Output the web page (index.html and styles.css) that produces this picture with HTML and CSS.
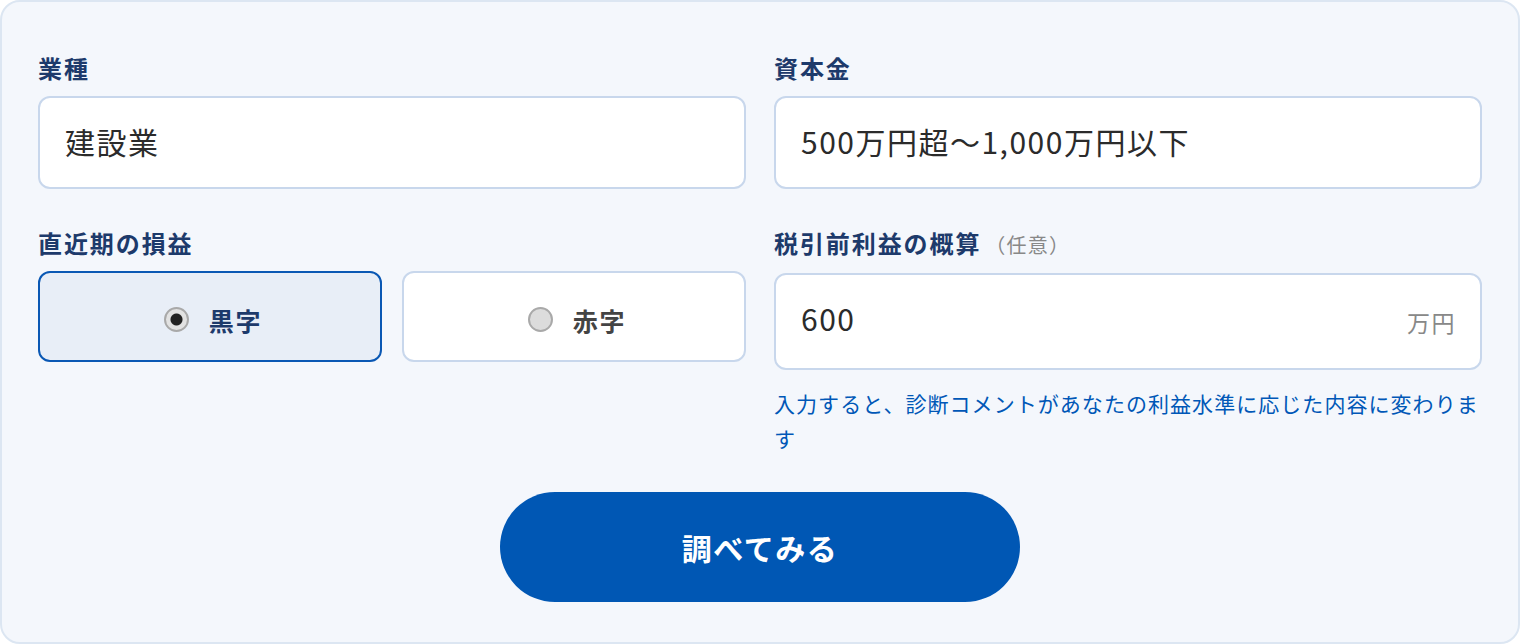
FILE: index.html
```html
<!DOCTYPE html>
<html lang="ja">

<head>
  <meta charset="UTF-8">
  <meta name="viewport" content="width=device-width, initial-scale=1.0">
  <title>診断フォーム</title>
  <link rel="stylesheet" href="styles.css">
</head>

<body>
  <form class="check-form" onsubmit="return false;">
    <div class="form-grid">
      <div class="field">
        <div class="field-label">業種</div>
        <div class="field-box">建設業</div>
      </div>

      <div class="field">
        <div class="field-label">資本金</div>
        <div class="field-box">500万円超〜1,000万円以下</div>
      </div>

      <div class="field">
        <div class="field-label">直近期の損益</div>
        <div class="choice-row">
          <label class="choice is-active">
            <span class="radio-dot checked"></span>
            <span class="choice-text">黒字</span>
          </label>
          <label class="choice">
            <span class="radio-dot"></span>
            <span class="choice-text">赤字</span>
          </label>
        </div>
      </div>

      <div class="field">
        <div class="field-label">税引前利益の概算<span class="optional">（任意）</span></div>
        <div class="field-box tall">
          <span>600</span>
          <span class="unit">万円</span>
        </div>
        <p class="hint">入力すると、診断コメントがあなたの利益水準に応じた内容に変わります</p>
      </div>
    </div>

    <div class="actions">
      <button type="submit" class="submit-btn">調べてみる</button>
    </div>
  </form>
</body>

</html>
```

FILE: styles.css
```css
* {
  box-sizing: border-box;
}

body {
  margin: 0;
  padding: 0;
  font-family: "Noto Sans CJK JP", "Noto Sans", sans-serif;
  background: #ffffff;
  color: #2b2b2b;
}

.check-form {
  width: 1520px;
  height: 644px;
  background: #f4f7fc;
  border: 2px solid #dce6f2;
  border-radius: 20px;
  padding: 48px 36px 40px;
}

.form-grid {
  display: grid;
  grid-template-columns: 1fr 1fr;
  column-gap: 28px;
  row-gap: 36px;
  align-items: start;
}

.field-label {
  font-size: 24px;
  line-height: 36px;
  font-weight: 700;
  letter-spacing: 0.08em;
  color: #1d3a6b;
  margin-bottom: 10px;
}

.optional {
  font-size: 20px;
  font-weight: 400;
  letter-spacing: 0.06em;
  color: #888;
  margin-left: 4px;
}

.field-box {
  display: flex;
  align-items: center;
  justify-content: space-between;
  height: 93px;
  padding: 0 24px 4px 25px;
  background: #fff;
  border: 2px solid #c8d7ec;
  border-radius: 12px;
  font-size: 30px;
  letter-spacing: 0.05em;
  color: #2b2b2b;
}

.field-box.tall {
  height: 97px;
  padding-bottom: 8px;
}

.unit {
  font-size: 23px;
  color: #888;
  margin-top: 8px;
}

.choice-row {
  display: grid;
  grid-template-columns: 1fr 1fr;
  gap: 20px;
}

.choice {
  display: flex;
  align-items: center;
  justify-content: center;
  gap: 20px;
  height: 91px;
  padding-top: 6px;
  background: #fff;
  border: 2px solid #c8d7ec;
  border-radius: 12px;
  cursor: pointer;
}

.choice.is-active {
  background: #e8eef7;
  border-color: #0a58b4;
}

.choice-text {
  font-size: 25px;
  font-weight: 700;
  letter-spacing: 0.07em;
  color: #444;
}

.choice.is-active .choice-text {
  color: #1d3a6b;
}

.radio-dot {
  width: 25px;
  height: 25px;
  border-radius: 50%;
  border: 2px solid #a9a9a9;
  background: #dcdcdc;
  margin-left: 6px;
}

.radio-dot.checked {
  background: radial-gradient(circle, #222 0 5.5px, #e2e2e2 6.5px);
}

.hint {
  margin: 16px 0 0;
  font-size: 21px;
  line-height: 35px;
  letter-spacing: 0.05em;
  color: #0057b7;
}

.actions {
  display: flex;
  justify-content: center;
  margin-top: 36px;
}

.submit-btn {
  width: 520px;
  height: 110px;
  border: none;
  border-radius: 55px;
  background: #0057b4;
  color: #fff;
  font-family: inherit;
  font-size: 30px;
  font-weight: 700;
  letter-spacing: 0.05em;
  cursor: pointer;
}

.submit-btn:hover {
  background: #004a99;
}
```
